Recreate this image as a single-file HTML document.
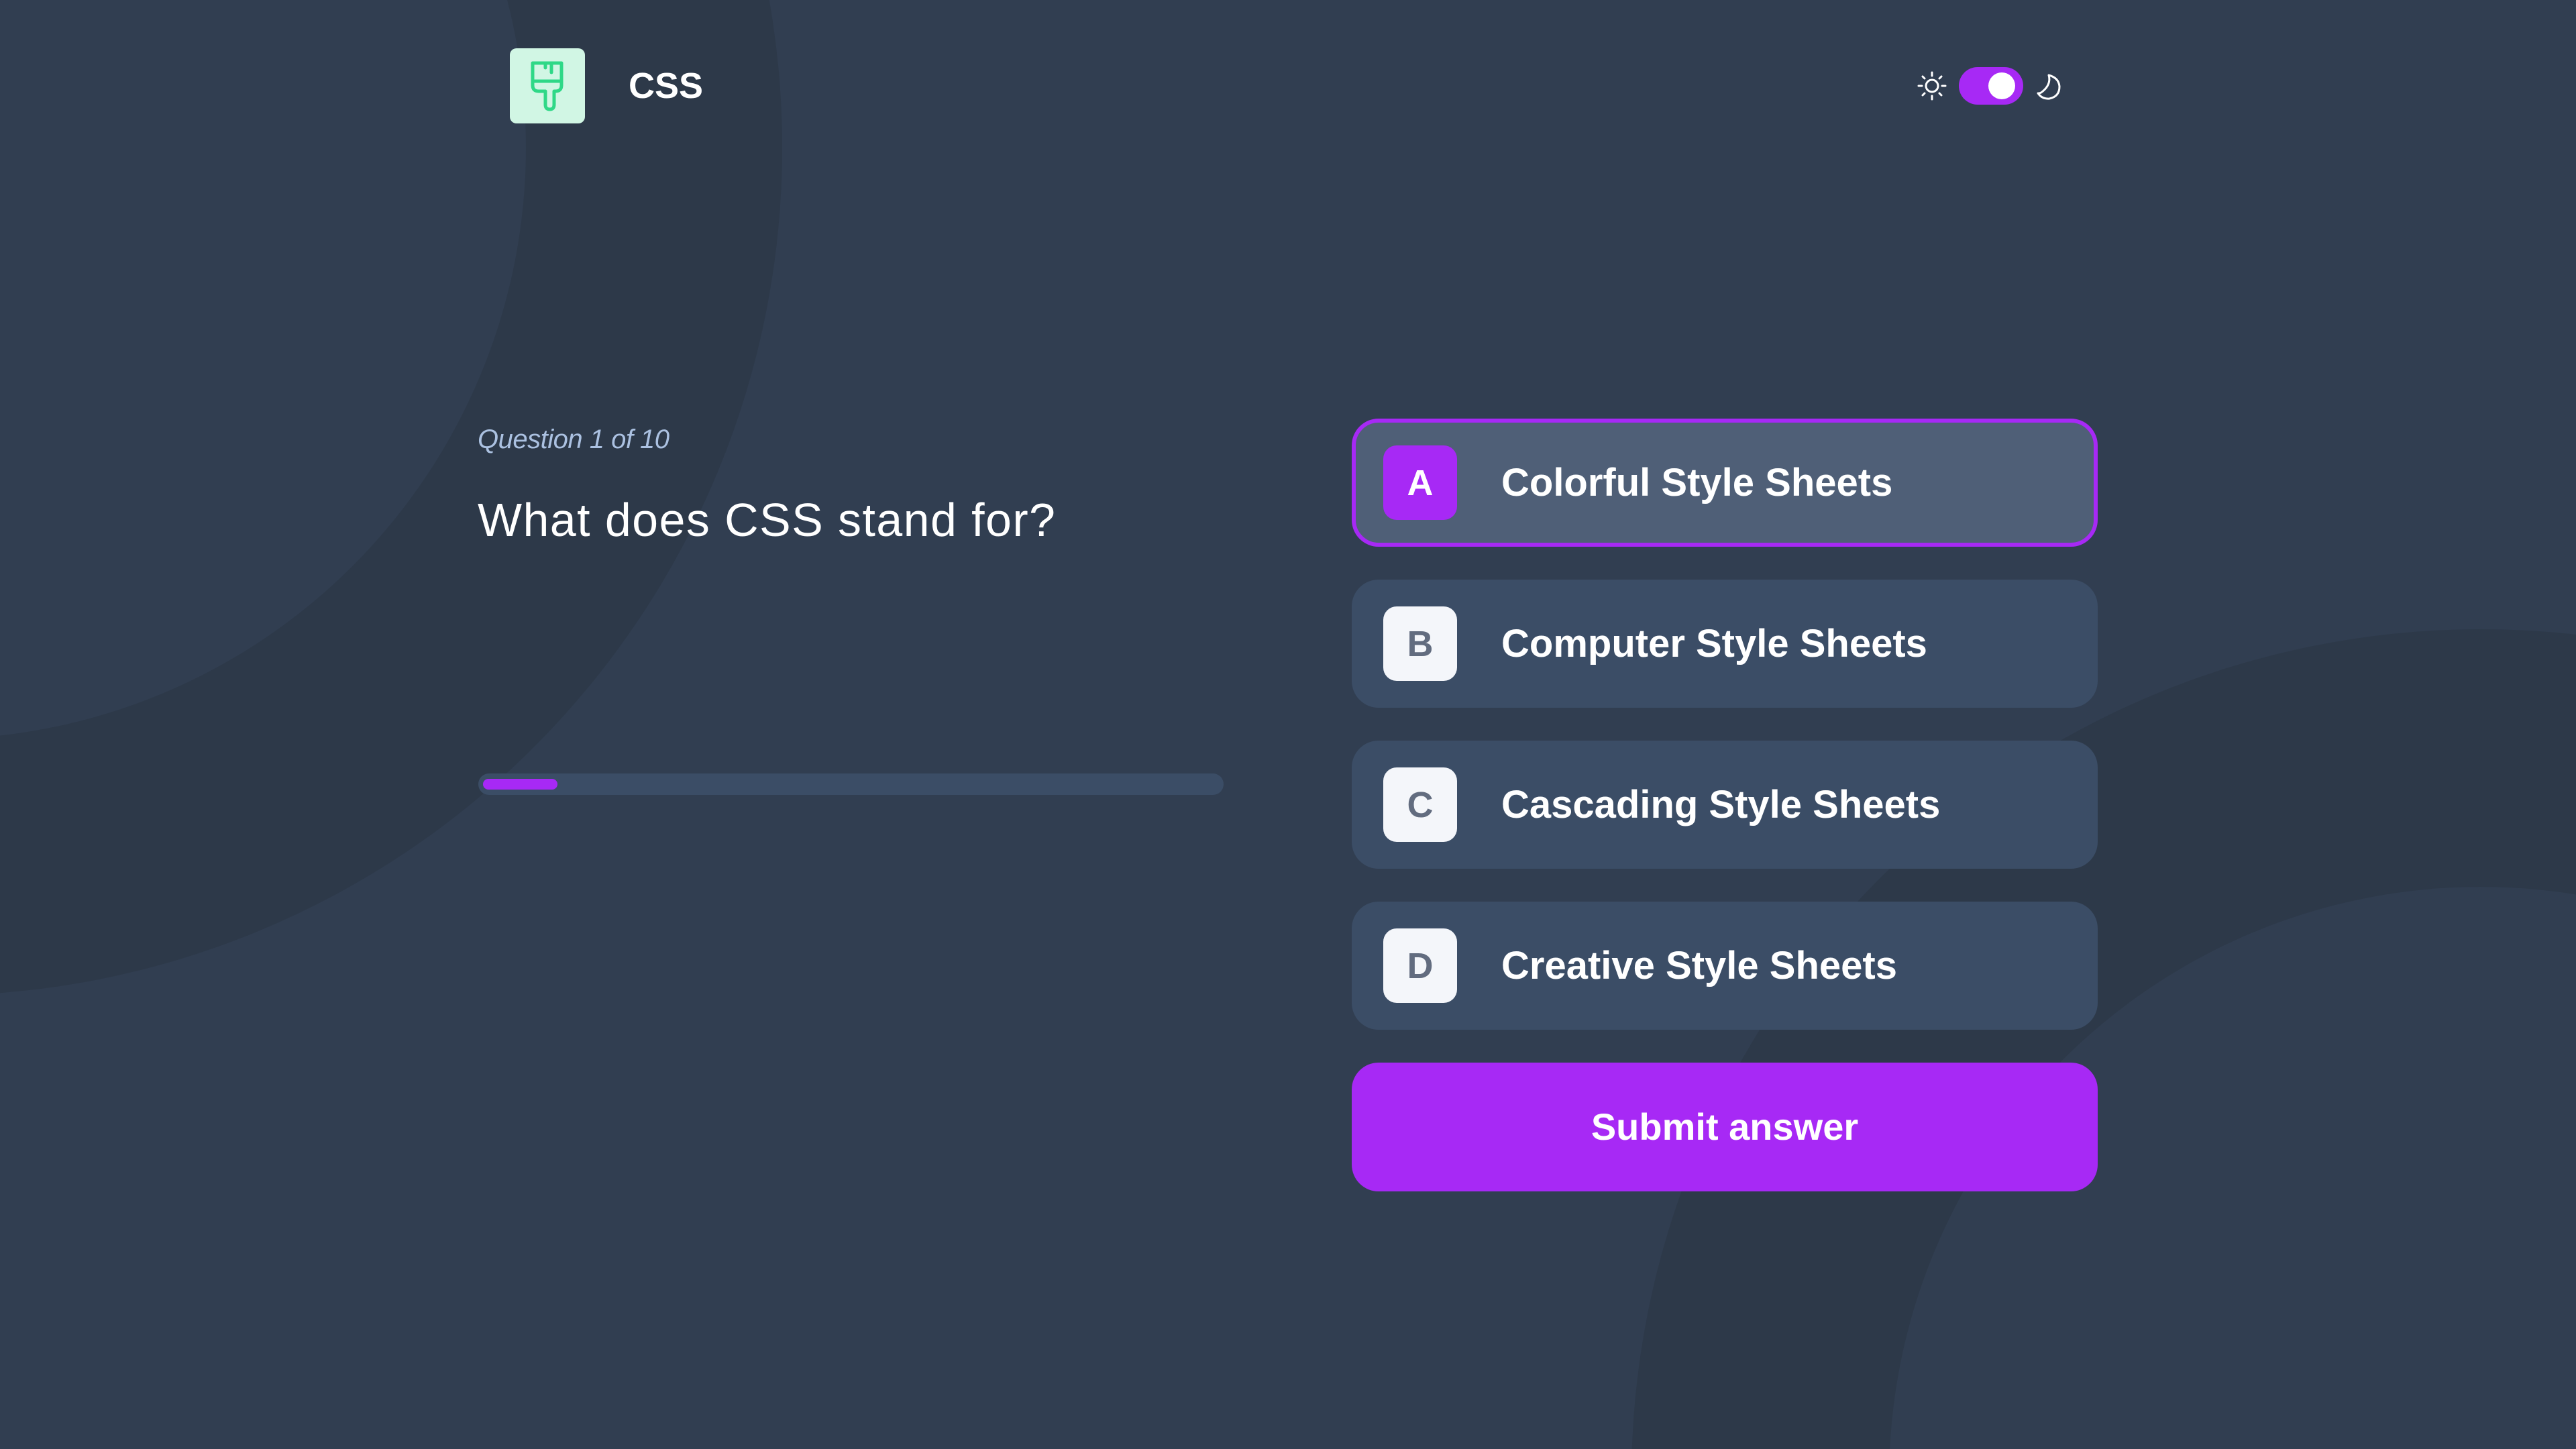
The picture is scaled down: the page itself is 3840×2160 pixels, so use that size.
<!DOCTYPE html>
<html><head><meta charset="utf-8"><style>
html,body{margin:0;padding:0;overflow:hidden}
body{width:3840px;height:2160px;background:#313e51;position:relative;overflow:hidden;font-family:"Liberation Sans",sans-serif;color:#fff}
.abs{position:absolute}
svg{display:block}
.opt{position:absolute;left:2015px;width:1112px;height:191px;background:#3b4d66;border-radius:40px;box-sizing:border-box}
.opt .l{position:absolute;left:47px;top:40px;width:110px;height:111px;border-radius:20px;background:#f4f6fa;color:#626c7f;font-weight:bold;font-size:54px;display:flex;align-items:center;justify-content:center}
.opt .t{position:absolute;left:223px;top:0;height:191px;line-height:191px;font-weight:bold;font-size:58px;white-space:nowrap}
</style></head><body>
<svg class="abs" style="left:0;top:0" width="3840" height="2160">
<path fill-rule="evenodd" fill="#2d3949" d="M -98 220 m -1264 0 a 1264 1264 0 1 0 2528 0 a 1264 1264 0 1 0 -2528 0 Z M -98 220 m -882 0 a 882 882 0 1 0 1764 0 a 882 882 0 1 0 -1764 0 Z"/>
<path fill-rule="evenodd" fill="#2d3949" d="M 3698 2204 m -1266 0 a 1266 1266 0 1 0 2532 0 a 1266 1266 0 1 0 -2532 0 Z M 3698 2204 m -882 0 a 882 882 0 1 0 1764 0 a 882 882 0 1 0 -1764 0 Z"/>
</svg>
<div class="abs" style="left:760px;top:72px;width:112px;height:112px;border-radius:10px;background:#d1f6e4">
<svg width="112" height="112" viewBox="0 0 112 112" fill="none" stroke="#2fd887" stroke-width="5" stroke-linejoin="round" stroke-linecap="round">
<path d="M34 22 H77 V55 Q77 64 68 64 H66 V84 Q66 91 59.5 91 Q53 91 53 84 V64 H43 Q34 64 34 55 Z"/>
<path d="M34 49 H77"/><path d="M53 22 V29"/><path d="M62 22 V36"/>
</svg></div>
<div class="abs" style="left:937px;top:92px;font-weight:bold;font-size:54px;line-height:72px">CSS</div>
<svg class="abs" style="left:2856px;top:104px" width="48" height="48" viewBox="0 0 48 48" fill="none" stroke="#fff" stroke-width="3" stroke-linecap="round">
<circle cx="24" cy="24" r="9"/><path d="M24 4v5M24 39v5M4 24h5M39 24h5M10 10l3 3M35 35l3 3M10 38l3-3M35 13l3-3"/>
</svg>
<div class="abs" style="left:2920px;top:100px;width:96px;height:56px;border-radius:28px;background:#a729f5"></div>
<div class="abs" style="left:2964px;top:108px;width:40px;height:40px;border-radius:50%;background:#fff"></div>
<svg class="abs" style="left:3034px;top:108px" width="42" height="42" viewBox="0 0 42 42" fill="none" stroke="#fff" stroke-width="3" stroke-linejoin="round">
<path d="M20 4 Q24 18 10 29 Q8 31 4 31 Q10 40 21 39 Q36 36 36 21 Q35 8 20 4 Z"/>
</svg>
<div class="abs" style="left:712px;top:633px;font-style:italic;font-size:40px;color:#abc1e1;letter-spacing:-0.5px">Question 1 of 10</div>
<div class="abs" style="left:712px;top:735px;font-size:70px;letter-spacing:1.4px">What does CSS stand for?</div>
<div class="abs" style="left:713px;top:1153px;width:1111px;height:32px;border-radius:16px;background:#3b4d66"></div>
<div class="abs" style="left:720px;top:1161px;width:111px;height:16px;border-radius:8px;background:#a729f5"></div>
<div class="opt" style="top:624px;background:#4f5f77;border:6px solid #a729f5"><div class="l" style="left:41px;top:34px;background:#a729f5;color:#fff">A</div><div class="t" style="left:217px;top:-6px">Colorful Style Sheets</div></div>
<div class="opt" style="top:864px"><div class="l">B</div><div class="t">Computer Style Sheets</div></div>
<div class="opt" style="top:1104px"><div class="l">C</div><div class="t">Cascading Style Sheets</div></div>
<div class="opt" style="top:1344px"><div class="l">D</div><div class="t">Creative Style Sheets</div></div>
<div class="abs" style="left:2015px;top:1584px;width:1112px;height:192px;border-radius:40px;background:#a729f5;text-align:center;line-height:192px;font-weight:bold;font-size:56px">Submit answer</div>
</body></html>
